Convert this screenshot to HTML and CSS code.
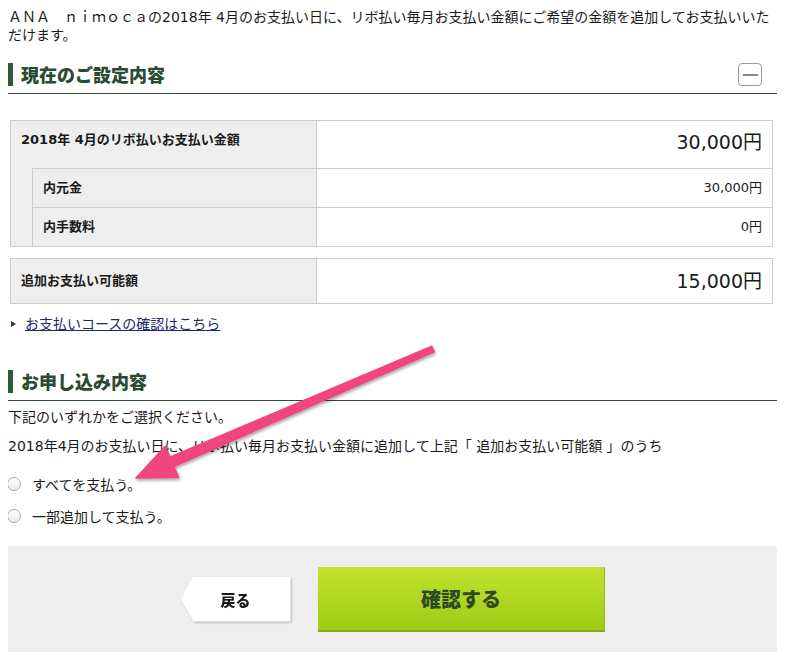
FILE: index.html
```html
<!DOCTYPE html>
<html lang="ja">
<head>
<meta charset="utf-8">
<title>お支払い金額の追加</title>
<link rel="stylesheet" href="styles.css">
</head>
<body>
<div class="page">
  <p class="intro">ＡＮＡ　ｎｉｍｏｃａの2018年 4月のお支払い日に、リボ払い毎月お支払い金額にご希望の金額を追加してお支払いいただけます。</p>

  <div class="section-head">
    <h2 class="section-title">現在のご設定内容</h2>
    <span class="toggle"></span>
  </div>

  <div class="amounts">
    <div class="cell label label-main">2018年 4月のリボ払いお支払い金額</div>
    <div class="cell value value-main">30,000円</div>
    <div class="cell indent"></div>
    <div class="cell label label-sub">内元金</div>
    <div class="cell value value-sub">30,000円</div>
    <div class="cell label label-sub">内手数料</div>
    <div class="cell value value-sub">0円</div>
  </div>

  <div class="amounts amounts-extra">
    <div class="cell label label-extra">追加お支払い可能額</div>
    <div class="cell value value-extra">15,000円</div>
  </div>

  <p class="course-link"><span class="tri"></span><a href="#">お支払いコースの確認はこちら</a></p>

  <div class="section-head section-head-apply">
    <h2 class="section-title">お申し込み内容</h2>
  </div>

  <p class="note note-first">下記のいずれかをご選択ください。</p>
  <p class="note">2018年4月のお支払い日に、リボ払い毎月お支払い金額に追加して上記「 追加お支払い可能額 」のうち</p>

  <label class="option option-first"><input type="radio" name="pay">すべてを支払う。</label>
  <label class="option"><input type="radio" name="pay">一部追加して支払う。</label>

  <div class="actions">
    <div class="back-wrap"><a href="#" class="btn-back">戻る</a></div>
    <a href="#" class="btn-confirm">確認する</a>
  </div>
</div>

<svg class="annotation" width="791" height="660" viewBox="0 0 791 660" xmlns="http://www.w3.org/2000/svg">
  <defs>
    <filter id="sh" x="-10%" y="-10%" width="130%" height="130%">
      <feDropShadow dx="1" dy="2" stdDeviation="1.6" flood-color="#000" flood-opacity="0.35"/>
    </filter>
  </defs>
  <polygon filter="url(#sh)" fill="#f1457e" stroke="#f1457e" stroke-width="1.5" stroke-linejoin="round"
    points="431.8,346.2 434.2,351.8 173.9,466.5 178.6,477.5 136,478 165.2,446.3 169.9,457.3"/>
</svg>
</body>
</html>
```

FILE: styles.css
```css
body {
  margin: 8px;
  font-family: "DejaVu Sans", "Noto Sans CJK JP", sans-serif;
  font-size: 14px;
  color: #1a1a1a;
  background: #fff;
}

.page {
  width: 769px;
}

.intro {
  margin: 0;
  line-height: 18px;
}

.section-head {
  display: flex;
  align-items: center;
  justify-content: space-between;
  margin-top: 19px;
  padding-bottom: 7px;
  border-bottom: 1px solid #2f4a3a;
}

.section-head-apply {
  margin-top: 36px;
}

.section-title {
  margin: 0;
  font-size: 18px;
  font-weight: 900;
  line-height: 23px;
  color: #2b4a33;
  border-left: 5px solid #2f5a3a;
  padding-left: 8px;
  font-family: "Noto Sans CJK JP", sans-serif;
}

.toggle {
  width: 24px;
  height: 23px;
  box-sizing: border-box;
  border: 1px solid #9a9a9a;
  border-radius: 4px;
  margin-right: 15px;
  display: flex;
  align-items: center;
  justify-content: center;
  background: #fff;
}

.toggle::before {
  content: "";
  width: 15px;
  height: 2px;
  background: #8a8a8a;
}

.amounts {
  display: grid;
  grid-template-columns: 21px 285px 1fr;
  grid-template-rows: 47px 39px 39px;
  width: 763px;
  box-sizing: border-box;
  margin: 26px 0 0 2px;
  border: 1px solid #cccccc;
}

.cell {
  box-sizing: border-box;
}

.label {
  background: #eeeeee;
  font-size: 13px;
  font-weight: bold;
  line-height: 20px;
  padding: 0 10px;
  display: flex;
  align-items: center;
}

.value {
  display: flex;
  align-items: center;
  justify-content: flex-end;
  padding: 0 10px;
  font-size: 13px;
  line-height: 20px;
}

.label-main {
  grid-column: 1 / 3;
  align-items: flex-start;
  padding-top: 9px;
  border-right: 1px solid #cccccc;
}

.value-main {
  align-items: flex-start;
  padding-top: 9px;
  font-size: 19px;
  line-height: 24px;
}

.indent {
  grid-column: 1;
  grid-row: 2 / 4;
  background: #eeeeee;
}

.label-sub {
  grid-column: 2;
  border-top: 1px solid #cccccc;
  border-left: 1px solid #cccccc;
  border-right: 1px solid #cccccc;
}

.value-sub {
  grid-column: 3;
  border-top: 1px solid #cccccc;
}

.amounts-extra {
  grid-template-columns: 306px 1fr;
  grid-template-rows: 44px;
  margin-top: 11px;
}

.label-extra {
  border-right: 1px solid #cccccc;
}

.value-extra {
  font-size: 19px;
  line-height: 24px;
}

.course-link {
  margin: 10px 0 0;
  line-height: 20px;
  display: flex;
  align-items: center;
}

.tri {
  width: 0;
  height: 0;
  border-top: 3px solid transparent;
  border-bottom: 3px solid transparent;
  border-left: 5px solid #1f3370;
  margin: 0 9px 0 3px;
}

.course-link a {
  color: #1c2a6c;
  text-decoration: underline;
}

.note {
  margin: 9px 0 0;
  line-height: 20px;
}

.note-first {
  margin-top: 6px;
}

.option {
  display: flex;
  align-items: center;
  height: 32px;
}

.option-first {
  margin-top: 12px;
}

.option input {
  appearance: none;
  -webkit-appearance: none;
  width: 14px;
  height: 14px;
  margin: 0 11px 0 -1px;
  border: 1px solid #a8a8a8;
  border-radius: 50%;
  background: linear-gradient(#ffffff, #ececec);
  box-sizing: border-box;
}

.actions {
  margin-top: 14px;
  height: 106px;
  background: #eeeeee;
  display: flex;
  align-items: center;
  justify-content: center;
  gap: 27px;
}

.back-wrap {
  filter: drop-shadow(1px 1px 1px rgba(0, 0, 0, 0.25));
}

.btn-back {
  display: flex;
  align-items: center;
  justify-content: center;
  width: 110px;
  height: 45px;
  background: #ffffff;
  clip-path: polygon(13px 0, 100% 0, 100% 100%, 13px 100%, 0 50%);
  color: #1a1a1a;
  font-size: 15px;
  font-weight: 900;
  text-decoration: none;
  font-family: "Noto Sans CJK JP", sans-serif;
}

.btn-confirm {
  display: flex;
  align-items: center;
  justify-content: center;
  width: 287px;
  height: 65px;
  box-sizing: border-box;
  background: linear-gradient(#c3e22e, #9ccb16);
  border-bottom: 2px solid #86ad12;
  box-shadow: inset -1px 0 0 #93bb14;
  color: #2d4a22;
  font-size: 20px;
  font-weight: 900;
  text-decoration: none;
  font-family: "Noto Sans CJK JP", sans-serif;
}

.annotation {
  position: absolute;
  top: 0;
  left: 0;
  pointer-events: none;
}
```
